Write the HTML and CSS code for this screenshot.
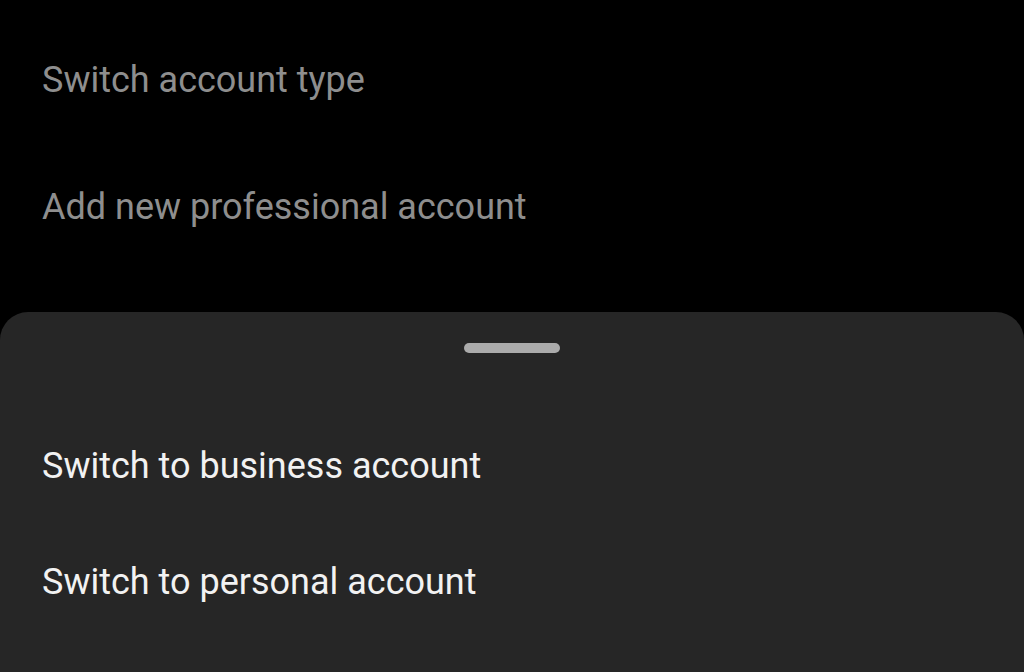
FILE: index.html
```html
<!DOCTYPE html>
<html>
<head>
<meta charset="utf-8">
<link rel="stylesheet" href="styles.css">
</head>
<body>
<div class="screen">
  <div class="menu">
    <div class="menu-item">Switch account type</div>
    <div class="menu-item">Add new professional account</div>
  </div>
  <div class="sheet">
    <div class="handle"></div>
    <div class="sheet-list">
      <div class="sheet-item">Switch to business account</div>
      <div class="sheet-item">Switch to personal account</div>
    </div>
  </div>
</div>
</body>
</html>
```
FILE: styles.css
```css
html, body {
  margin: 0;
  padding: 0;
  background: #000;
}
.screen {
  width: 1024px;
  height: 672px;
  overflow: hidden;
  display: flex;
  flex-direction: column;
  font-family: Roboto, "Noto Sans", sans-serif;
}
.menu {
  display: flex;
  flex-direction: column;
  padding: 0 0 0 42px;
  height: 312px;
}
.menu-item {
  height: 127px;
  line-height: 40px;
  padding-top: 60px;
  box-sizing: border-box;
  font-size: 36px;
  color: #8e8e8e;
}
.menu-item + .menu-item {
  height: 125px;
  padding-top: 60px;
}
.sheet {
  flex: 1;
  background: #262626;
  border-radius: 28px 28px 0 0;
  display: flex;
  flex-direction: column;
}
.handle {
  width: 96px;
  height: 10px;
  border-radius: 5px;
  background: #ababab;
  margin: 31px auto 0;
}
.sheet-list {
  display: flex;
  flex-direction: column;
  padding: 93px 0 0 42px;
  gap: 76px;
}
.sheet-item {
  font-size: 36px;
  line-height: 40px;
  color: #f2f2f2;
}
```
